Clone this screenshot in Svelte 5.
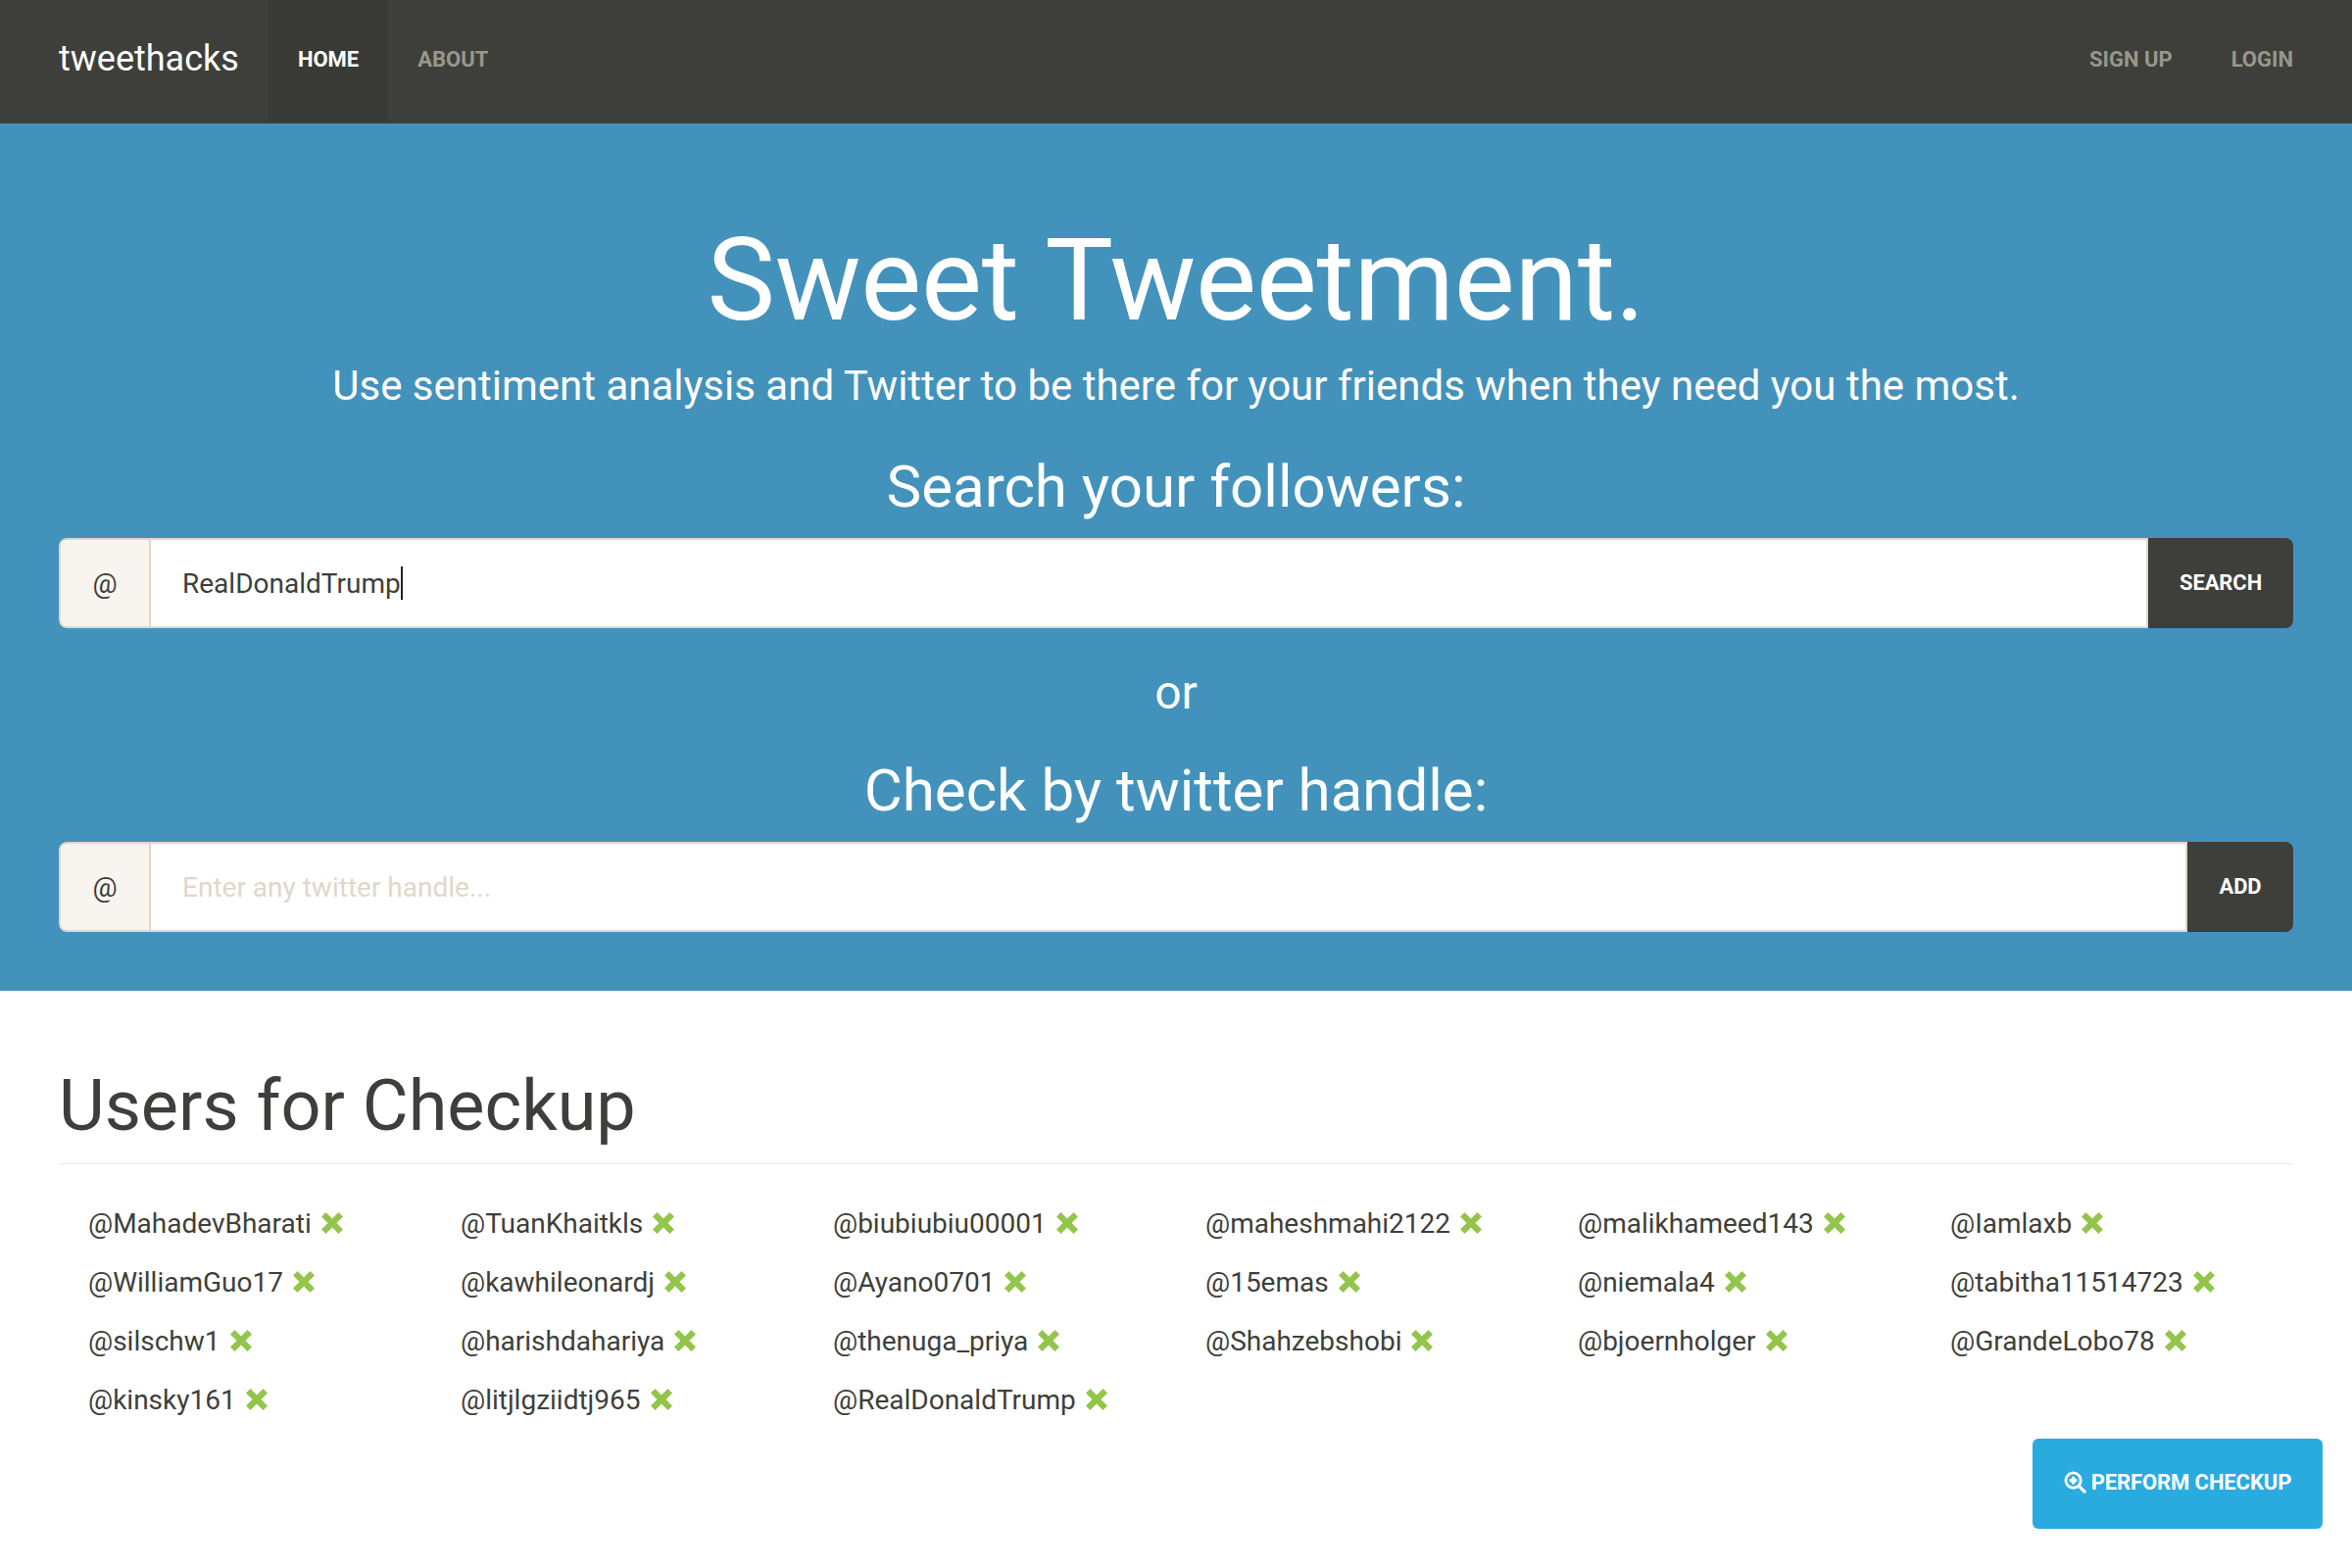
<script>
const columns = [
  ["@MahadevBharati","@WilliamGuo17","@silschw1","@kinsky161"],
  ["@TuanKhaitkls","@kawhileonardj","@harishdahariya","@litjlgziidtj965"],
  ["@biubiubiu00001","@Ayano0701","@thenuga_priya","@RealDonaldTrump"],
  ["@maheshmahi2122","@15emas","@Shahzebshobi"],
  ["@malikhameed143","@niemala4","@bjoernholger"],
  ["@Iamlaxb","@tabitha11514723","@GrandeLobo78"]
];
</script>

<div class="page">
  <nav class="nav">
    <div class="brand">tweethacks</div>
    <a class="link active">HOME</a>
    <a class="link">ABOUT</a>
    <div class="spacer"></div>
    <a class="link">SIGN UP</a>
    <a class="link">LOGIN</a>
  </nav>
  <section class="hero">
    <h1>Sweet Tweetment.</h1>
    <p class="lead">Use sentiment analysis and Twitter to be there for your friends when they need you the most.</p>
    <h3>Search your followers:</h3>
    <div class="group">
      <span class="at">@</span>
      <div class="input"><span>RealDonaldTrump</span><i class="caret"></i></div>
      <button class="btn search">SEARCH</button>
    </div>
    <p class="or">or</p>
    <h3 class="second">Check by twitter handle:</h3>
    <div class="group">
      <span class="at">@</span>
      <div class="input ph">Enter any twitter handle...</div>
      <button class="btn add">ADD</button>
    </div>
  </section>
  <section class="users">
    <h2>Users for Checkup</h2>
    <div class="grid">
      {#each columns as col}
        <div class="col">
          {#each col as u}
            <div class="user">{u}
              <svg class="x" viewBox="0 0 24 24" width="24" height="24"><path d="M5.5 1 12 7.5 18.500 1 23 5.500 16.500 12 23 18.500 18.500 23 12 16.500 5.500 23 1 18.500 7.500 12 1 5.500Z"/></svg>
            </div>
          {/each}
        </div>
      {/each}
    </div>
    <div class="actions">
      <button class="perform">
        <svg viewBox="0 0 24 24" width="23" height="23" fill="none" stroke="#fff" stroke-width="3"><circle cx="10" cy="10" r="8"/><path d="M16 16 23 23" stroke-width="3.500"/><path d="M10 6v8M6 10h8" stroke-width="3.500"/></svg>
        PERFORM CHECKUP
      </button>
    </div>
  </section>
</div>

<style>
:global(body){margin:0;font-family:Roboto,sans-serif;background:#fff}
.page{width:2400px;height:1600px;overflow:hidden}
.nav{height:126px;background:#3e3f3a;display:flex;align-items:flex-start;padding:0 60px;color:#fff}
.brand{font-size:36px;line-height:120px;margin-right:30px;color:#fff}
.link{font-size:22px;font-weight:700;padding:0 30px;height:124px;line-height:121px;color:#98978b}
.link.active{background:#393a35;color:#fff}
.link:last-child{padding-right:0}
.spacer{flex:1}
.hero{height:885px;background:#4392bb;box-sizing:border-box;padding:95px 60px 0;color:#fff;text-align:center}
h1{font-size:117px;font-weight:400;line-height:130px;margin:0;letter-spacing:-.3px}
.lead{font-size:42px;line-height:60px;margin:13px 0 0}
h3{font-size:60px;font-weight:400;line-height:66px;margin:40px 0 19px}
h3.second{margin-top:37px}
.group{display:flex;height:92px;border-radius:8px;overflow:hidden;text-align:left}
.at{width:94px;background:#f8f5f0;color:#3e3f3a;font-size:28px;display:flex;align-items:center;justify-content:center;border:2px solid #dfd7ca;border-radius:8px 0 0 8px;box-sizing:border-box}
.input{flex:1;display:flex;align-items:center;padding-left:32px;font-size:28px;color:#3e3f3a;background:#fff;border:2px solid #dfd7ca;border-left:0;box-sizing:border-box}
.input.ph{color:#dfd7ca}
.caret{width:2px;height:34px;background:#222}
.btn{border:0;background:#3e3f3a;color:#fff;font:700 22px Roboto,sans-serif;letter-spacing:-.1px;height:92px;padding-bottom:2px}
.search{width:148px}
.add{width:108px}
.or{font-size:48px;line-height:60px;margin:36px 0 0}
.users{padding:78px 60px 0}
h2{font-size:72px;font-weight:400;color:#3e3f3a;line-height:80px;margin:0;padding-bottom:18px;border-bottom:1px solid #f0ede7}
.grid{display:grid;grid-template-columns:repeat(6,380px);margin-top:30px;padding-left:30px}
.user{font-size:28px;color:#3e3f3a;height:60px;display:flex;align-items:center;gap:9px}
.x{fill:#93c54b}
.actions{display:flex;justify-content:flex-end;margin:10px -30px 0 0}
.perform{height:92px;width:296px;border:0;border-radius:6px;background:#29abe0;color:#fff;font:700 22px Roboto,sans-serif;letter-spacing:-.1px;display:flex;align-items:center;justify-content:center;gap:5px;padding-bottom:4px}
</style>
